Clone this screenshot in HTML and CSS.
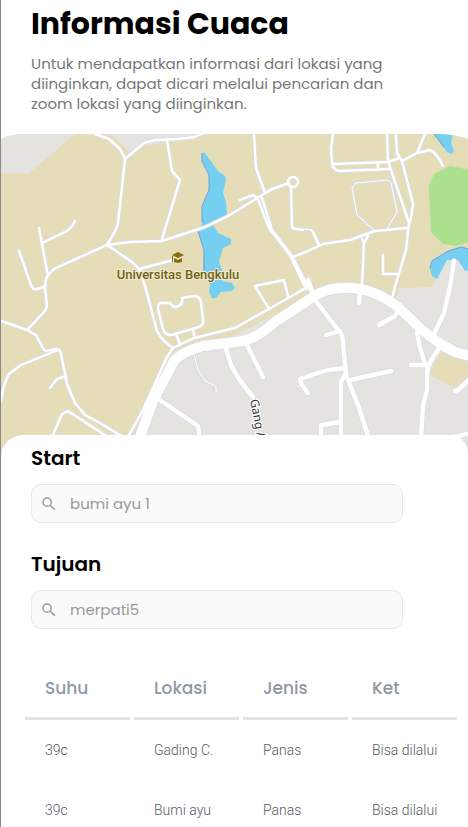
FILE: index.html
```html
<!DOCTYPE html>
<html lang="id">
<head>
<meta charset="utf-8">
<meta name="viewport" content="width=device-width, initial-scale=1">
<title>Informasi Cuaca</title>
<link rel="stylesheet" href="styles.css">
</head>
<body>
<main class="page">
  <header class="intro">
    <h1 class="title">Informasi Cuaca</h1>
    <p class="lead">Untuk mendapatkan informasi dari lokasi yang diinginkan, dapat dicari melalui pencarian dan zoom lokasi yang diinginkan.</p>
  </header>

  <svg class="map" viewBox="1 134 467 323" role="img" aria-label="Peta Universitas Bengkulu">
    <defs>
      <clipPath id="frame"><path d="M1 139Q10 134 27 134H441Q458 135 468 139V457H1Z"/></clipPath>
      <g id="small-roads">
        <path d="M95 134L109 139L120 149L125 159L118 223Q117 229 107 245L54 269L48 275Q45 279 45 288L47 306L45 311L27 330"/>
        <path d="M125 159L144 143L155 140L178 139L194 137L204 133M167 140L172 171L180 180L162 239"/>
        <path d="M107 245L130 242L162 241L205 227L228 216L259 197L272 189L289 183"/>
        <path d="M107 245L132 262L139 269Q144 281 149 301L157 331Q163 342 173 348M139 269L173 260"/>
        <path d="M39 228L48 276M42 243L65 232Q72 228 75 221M19 251L31 285Q33 290 37 289L44 287"/>
        <path d="M254 134L256 168L261 182L265 193M240 200L253 195L258 199L269 228L290 255L306 289M262 198L272 230L292 256L309 289"/>
        <circle cx="293" cy="182" r="5"/>
        <path d="M291 187L292 226Q292 229 296 229L303 230M311 230L313 232L319 245M293 257L308 251L323 244L350 240L375 231L407 228"/>
        <path d="M269 309L255 286L284 280L288 296"/>
        <path d="M333 134L331 148L332 163Q333 170 339 171L390 169M333 164L388 162L400 158L402 161M378 164V169"/>
        <path d="M387 134L388 161L409 223L406 250L395 287L392 299M396 134L397 153L402 161L413 204L411 218L409 224M402 161L417 153L430 150Q436 152 443 166M425 134L417 153"/>
        <path d="M362 239L364 243L362 285V292M368 236L364 243M383 255V274H397"/>
        <path d="M128 437L143 410L167 357L173 348L194 338L235 328L304 289M160 303L170 303Q175 310 180 305Q183 303 182 298L194 296Q200 296 201 302L203 320Q204 325 199 327L171 335Q165 335 163 329L158 309Q158 304 160 303M176 334L180 344M193 330L195 338"/>
        <path d="M1 321L13 325L27 330L36 335L44 350Q46 352 54 349Q60 348 61 354L67 384L75 403L85 415L100 423L123 437M58 350L21 365L9 374Q3 385 1 401M66 376L57 379L50 388M52 437L62 414L68 411L108 437"/>
      </g>
      <g id="thin-roads">
        <path d="M303 229L312 230M375 231L357 215L352 188L356 183L388 180L391 183L397 212L387 229"/>
        <path d="M194 354L198 370L205 381L216 386V392M302 383L297 387"/>
      </g>
      <g id="medium-roads">
        <path d="M157 398L198 426L200 440M226 348L231 365Q237 378 253 397M246 343L263 377M310 376L300 379L302 385L308 393"/>
        <path d="M308 280L315 300L339 331Q343 335 343 343L346 375L358 405L369 439M326 335L340 331M360 287L359 303M399 309L395 316L379 325"/>
        <path d="M454 261L450 287L444 313L434 334M417 332L420 347L425 365M411 365H427M441 345L432 359Q427 367 427 375V390L423 405L421 438"/>
        <path d="M346 368L328 370L308 376M391 371L350 380M346 373L341 382V438M341 422L321 425V438M470 379L460 388Q459 390 455 391M454 437L470 433"/>
      </g>
      <path id="main-road" d="M138 442L153 401L174 361Q180 353 203 346L236 342Q254 341 275 322L310 299Q325 288 342 288Q370 286 398 307L422 330L442 345L455 352L470 356"/>
    </defs>
    <g clip-path="url(#frame)">
      <path class="campus" d="M0 134H468V457H0Z"/>
      <path class="urban" d="M0 134H75L28 174L0 173ZM112 134L130 153L144 146L178 141L198 134ZM136 440L172 364L200 349L235 335L270 317L310 296L345 290L396 300L399 288L432 287L441 266L448 258L470 264V457H136Z"/>
      <path class="campus" d="M444 346L470 358V379L455 388L429 375Z"/>
      <path class="green" d="M450 166L470 170V242L456 246L443 244L431 232L429 185L434 174Z"/>
      <path class="water" d="M202 153L205 153L218 171L225 176L226 179L223 193L226 202L227 215L213 225L218 233L231 239V244L223 248L219 262L222 270L223 281L232 283L235 288L232 291L221 292L216 298L212 298L209 292L210 285L203 270L204 250L198 231L202 224L202 206L209 190L209 175L202 161Z"/>
      <path class="water" d="M434 134L447 152L452 154L454 151L451 143L453 134ZM430 268L432 261L448 251L461 247L470 249V270L465 271L458 260H447L437 279L432 276Z"/>
      <path class="shore" d="M202 153V161L209 175V190L202 206V222M198 231L204 250V270M430 268L432 261L448 251L461 247L470 249M434 134L444 147"/>
      <use class="edge edge-thin" href="#thin-roads"/>
      <use class="edge edge-small" href="#small-roads"/>
      <use class="edge edge-medium" href="#medium-roads"/>
      <use class="edge edge-main" href="#main-road"/>
      <use class="road road-thin" href="#thin-roads"/>
      <use class="road road-small" href="#small-roads"/>
      <use class="road road-medium" href="#medium-roads"/>
      <use class="road road-main" href="#main-road"/>
      <path class="campus-icon" d="M178 252L184 255L178 258L172 255ZM174 258L178 260L182 258V262L178 263L174 262ZM173 256V262H172V256Z"/>
      <text class="campus-label" x="178" y="279" text-anchor="middle">Universitas Bengkulu</text>
      <text class="street-label" transform="translate(250 400) rotate(79)">Gang A</text>
    </g>
  </svg>

  <section class="sheet">
    <form class="search">
      <div class="field">
        <label class="field-label" for="start">Start</label>
        <div class="field-box">
          <svg class="search-icon" viewBox="0 0 24 24" aria-hidden="true"><path d="M15.5 14h-.79l-.28-.27A6.47 6.47 0 0 0 16 9.5 6.5 6.5 0 1 0 9.5 16c1.61 0 3.09-.59 4.23-1.57l.27.28v.79l5 4.99L20.49 19l-4.99-5zm-6 0a4.5 4.5 0 1 1 0-9 4.5 4.5 0 0 1 0 9z"/></svg>
          <input class="field-input" id="start" type="text" value="bumi ayu 1">
        </div>
      </div>
      <div class="field">
        <label class="field-label" for="tujuan">Tujuan</label>
        <div class="field-box">
          <svg class="search-icon" viewBox="0 0 24 24" aria-hidden="true"><path d="M15.5 14h-.79l-.28-.27A6.47 6.47 0 0 0 16 9.5 6.5 6.5 0 1 0 9.5 16c1.61 0 3.09-.59 4.23-1.57l.27.28v.79l5 4.99L20.49 19l-4.99-5zm-6 0a4.5 4.5 0 1 1 0-9 4.5 4.5 0 0 1 0 9z"/></svg>
          <input class="field-input" id="tujuan" type="text" value="merpati5">
        </div>
      </div>
    </form>

    <table class="weather">
      <thead>
        <tr><th scope="col">Suhu</th><th scope="col">Lokasi</th><th scope="col">Jenis</th><th scope="col">Ket</th></tr>
      </thead>
      <tbody>
        <tr><td>39c</td><td>Gading C.</td><td>Panas</td><td>Bisa dilalui</td></tr>
        <tr><td>39c</td><td>Bumi ayu</td><td>Panas</td><td>Bisa dilalui</td></tr>
      </tbody>
    </table>
  </section>
</main>
</body>
</html>
```
FILE: styles.css
```css
* {
  box-sizing: border-box;
}

body {
  margin: 0;
  background: #fff;
  color: #000;
  font-family: Poppins, Inter, "Liberation Sans", sans-serif;
}

.page {
  border-left: 1px solid #888;
}

.intro {
  padding: 4px 30px 20px;
}

.title {
  margin: 0;
  font-size: 30px;
  line-height: 40px;
  font-weight: 700;
}

.lead {
  max-width: 372px;
  margin: 10px 0 0;
  color: #777;
  font-size: 15px;
  line-height: 20px;
}

.map {
  display: block;
  width: 100%;
  height: auto;
}

.campus { fill: #e5ddb7; }
.urban { fill: #e4e3e0; }
.green { fill: #abe08f; }
.water { fill: #75cff0; }
.shore { fill: none; stroke: #6d9fe0; stroke-width: 1; }

.edge,
.road {
  fill: none;
  stroke-linecap: round;
  stroke-linejoin: round;
}

.edge { stroke: #dcdce6; }
.road { stroke: #fff; }
.edge-thin { stroke-width: 3; }
.edge-small { stroke-width: 4; }
.edge-medium { stroke-width: 6; }
.edge-main { stroke-width: 12; }
.road-thin { stroke-width: 1; }
.road-small { stroke-width: 2.4; }
.road-medium { stroke-width: 4.4; }
.road-main { stroke-width: 10; }

.campus-icon { fill: #83700c; }

.campus-label {
  fill: #6f6313;
  stroke: #f0ead0;
  stroke-width: 2px;
  paint-order: stroke;
  font: 500 13px Roboto, sans-serif;
}

.street-label {
  fill: #333;
  stroke: #fff;
  stroke-width: 2px;
  paint-order: stroke;
  font: 400 12px "Noto Sans", sans-serif;
}

.sheet {
  position: relative;
  margin-top: -22px;
  padding: 7px 7px 0 20px;
  border-radius: 22px 18px 0 0;
  background: #fff;
}

.search {
  display: grid;
  gap: 25px;
  max-width: 382px;
  padding-left: 10px;
}

.field {
  display: grid;
  gap: 10px;
}

.field-label {
  font-size: 20px;
  line-height: 32px;
  font-weight: 600;
}

.field-box {
  display: flex;
  align-items: center;
  gap: 12px;
  height: 39px;
  padding: 0 8px;
  border: 1px solid #e8e8e8;
  border-radius: 10px;
  background: #fafafa;
}

.search-icon {
  flex: none;
  width: 18px;
  height: 18px;
  fill: #999;
}

.field-input {
  flex: 1;
  min-width: 0;
  padding: 0;
  border: 0;
  outline: 0;
  background: transparent;
  color: #999;
  font: inherit;
  font-size: 15px;
  line-height: 24px;
}

.weather {
  width: 100%;
  margin-top: 29px;
  border-spacing: 4px 0;
  table-layout: fixed;
  text-align: left;
}

.weather th,
.weather td {
  height: 60px;
  padding: 0 0 0 20px;
  white-space: nowrap;
}

.weather th {
  height: 62px;
  border-bottom: 3px solid #e3e4e9;
  color: #8f98a5;
  font-size: 17px;
  font-weight: 500;
}

.weather td {
  color: #555a63;
  font-family: Roboto, sans-serif;
  font-size: 14px;
  font-weight: 300;
}
```
